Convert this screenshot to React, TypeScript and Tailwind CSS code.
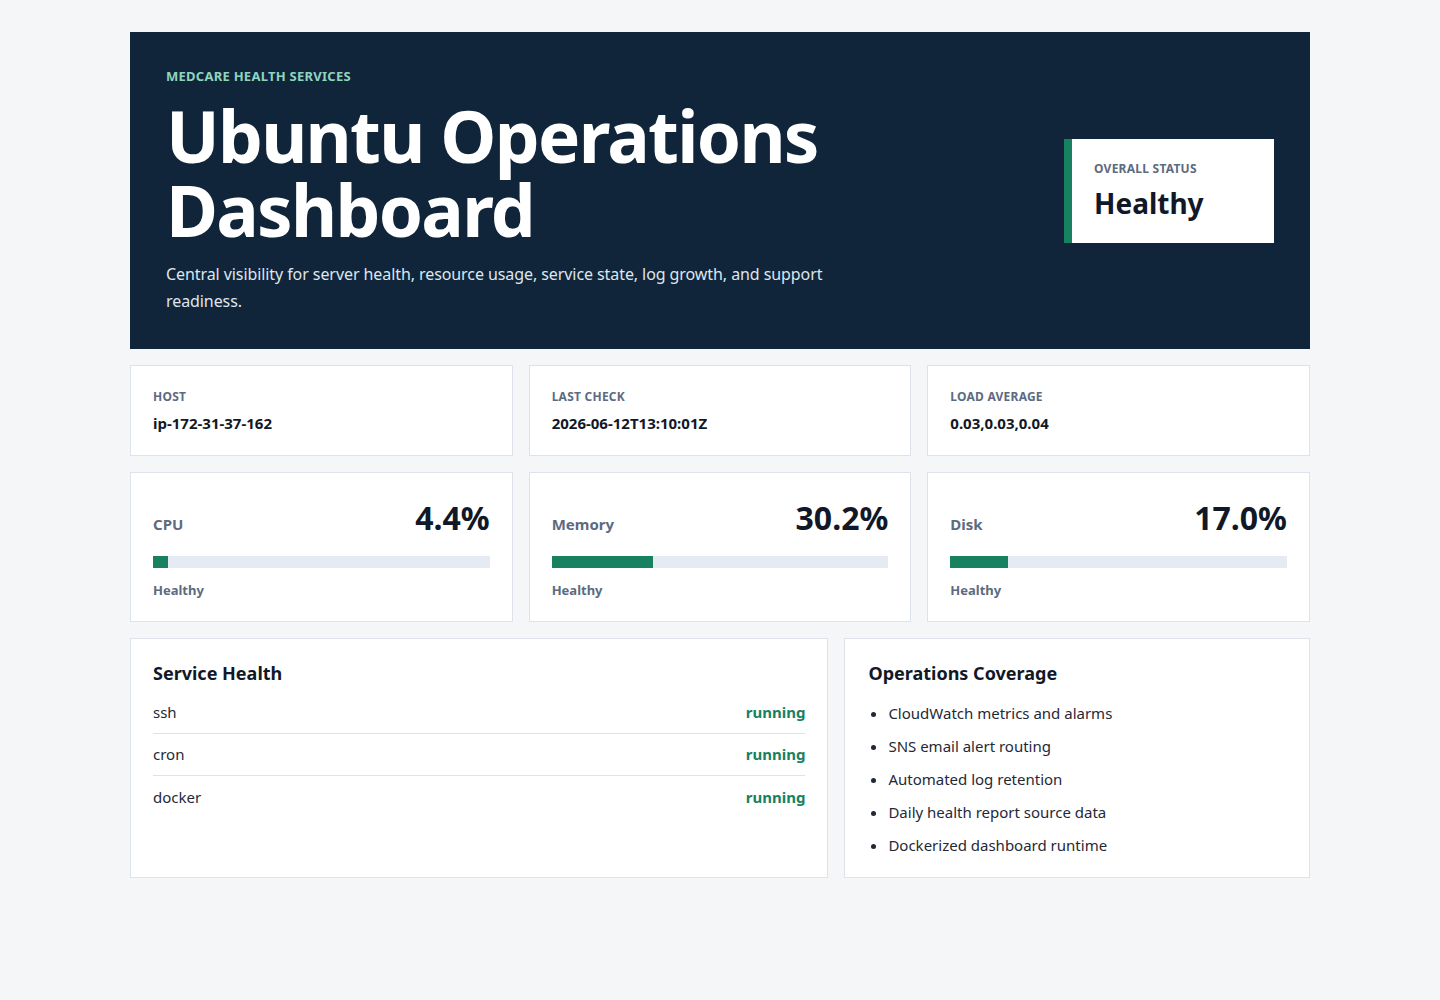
import React from "react";

const font = { fontFamily: '"Noto Sans", "Open Sans", sans-serif' };

function InfoCard({ label, value }: { label: string; value: string }) {
  return (
    <div className="bg-white border border-[#dde2eb] px-[22px] pt-[23px] h-[91px]">
      <div className="text-[12px] font-bold uppercase tracking-[0.02em] text-[#5d6a80] leading-[16px]">{label}</div>
      <div className="mt-[8px] text-[15px] font-bold text-[#111827] leading-[20px]">{value}</div>
    </div>
  );
}

function MetricCard({ label, value, pct }: { label: string; value: string; pct: number }) {
  return (
    <div className="bg-white border border-[#dde2eb] px-[22px] h-[150px] flex flex-col">
      <div className="flex items-end justify-between mt-[25px]">
        <div className="text-[15px] font-bold text-[#5d6a80] leading-[20px] mb-[4px]">{label}</div>
        <div className="text-[32px] font-bold text-[#111827] leading-[40px]">{value}</div>
      </div>
      <div className="mt-[18px] h-[12px] bg-[#e6ebf3]">
        <div className="h-full bg-[#178160]" style={{ width: `${pct}%` }} />
      </div>
      <div className="mt-[13px] text-[13px] font-bold text-[#5d6a80] leading-[18px]">Healthy</div>
    </div>
  );
}

export default function App() {
  return (
    <div className="min-h-[1000px] bg-[#f5f6f8]" style={font}>
      <div className="w-[1180px] mx-auto pt-[32px] flex flex-col gap-[16px]">
        <div className="bg-[#10243a] h-[317px] px-[36px] flex items-center justify-between">
          <div className="w-[720px] pt-[1px]">
            <div className="text-[13px] font-bold uppercase tracking-[0.02em] text-[#8fd4bf] leading-[18px]">Medcare Health Services</div>
            <h1 className="mt-[14px] text-[71px] font-bold text-white leading-[74px] tracking-[-0.024em]">
              <span className="block">Ubuntu Operations</span>
              <span className="block">Dashboard</span>
            </h1>
            <p className="mt-[14px] max-w-[680px] text-[16px] tracking-[-0.005em] text-[#dfe6ee] leading-[27px]">
              Central visibility for server health, resource usage, service state, log growth, and support readiness.
            </p>
          </div>
          <div className="w-[210px] h-[104px] bg-white border-l-[8px] border-[#178160] pl-[22px] pt-[22px]">
            <div className="text-[12px] font-bold uppercase tracking-[0.02em] text-[#5d6a80] leading-[16px]">Overall Status</div>
            <div className="mt-[6px] text-[28px] font-bold text-[#111827] leading-[40px]">Healthy</div>
          </div>
        </div>

        <div className="grid grid-cols-3 gap-[16px]">
          <InfoCard label="Host" value="ip-172-31-37-162" />
          <InfoCard label="Last Check" value="2026-06-12T13:10:01Z" />
          <InfoCard label="Load Average" value="0.03,0.03,0.04" />
        </div>

        <div className="grid grid-cols-3 gap-[16px]">
          <MetricCard label="CPU" value="4.4%" pct={4.4} />
          <MetricCard label="Memory" value="30.2%" pct={30.2} />
          <MetricCard label="Disk" value="17.0%" pct={17.0} />
        </div>

        <div className="grid grid-cols-[1.5fr_1fr] gap-[16px]">
          <div className="bg-white border border-[#dde2eb] px-[22px] pt-[21px] h-[240px]">
            <h2 className="text-[18px] font-bold text-[#111827] leading-[26px]">Service Health</h2>
            <div className="mt-[6px]">
              {["ssh", "cron", "docker"].map((s, i) => (
                <div
                  key={s}
                  className={`flex justify-between items-center h-[42px] ${i < 2 ? "border-b border-[#dde2eb]" : ""}`}
                >
                  <span className="text-[15px] text-[#1f2937]">{s}</span>
                  <span className="text-[15px] font-bold text-[#178160]">running</span>
                </div>
              ))}
            </div>
          </div>
          <div className="bg-white border border-[#dde2eb] px-[23px] pt-[21px] h-[240px]">
            <h2 className="text-[18px] font-bold text-[#111827] leading-[26px]">Operations Coverage</h2>
            <ul className="mt-[17px] list-disc pl-[20px] text-[15px] text-[#1f2937] leading-[20px] flex flex-col gap-[13px]">
              <li>CloudWatch metrics and alarms</li>
              <li>SNS email alert routing</li>
              <li>Automated log retention</li>
              <li>Daily health report source data</li>
              <li>Dockerized dashboard runtime</li>
            </ul>
          </div>
        </div>
      </div>
    </div>
  );
}
